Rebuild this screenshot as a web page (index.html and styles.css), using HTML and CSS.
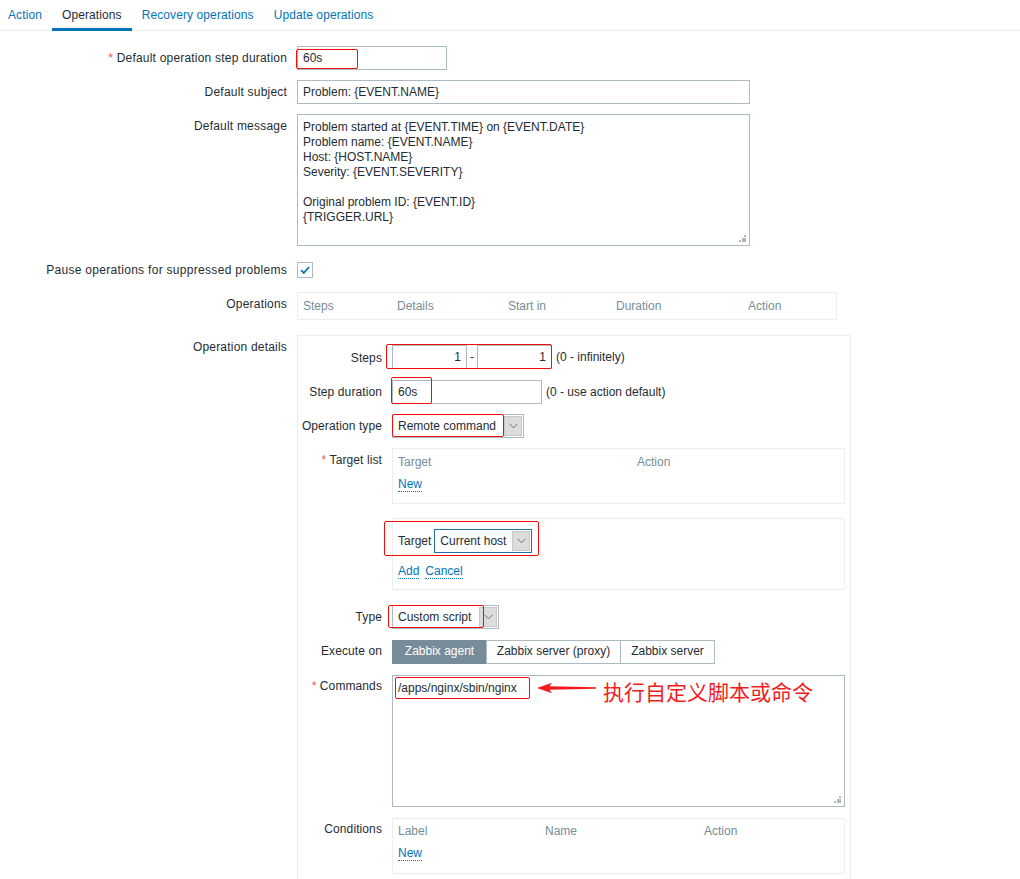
FILE: index.html
```html
<!DOCTYPE html>
<html>
<head>
<meta charset="utf-8">
<link rel="stylesheet" href="styles.css">
</head>
<body>
<div class="tabs">
  <a class="tab">Action</a>
  <a class="tab active">Operations</a>
  <a class="tab">Recovery operations</a>
  <a class="tab">Update operations</a>
</div>

<div class="form">
  <div class="row">
    <div class="lbl"><span class="req">*</span> Default operation step duration</div>
    <div class="input w150">60s<i class="mark m-dur"></i></div>
  </div>
  <div class="row">
    <div class="lbl">Default subject</div>
    <div class="input w453">Problem: {EVENT.NAME}</div>
  </div>
  <div class="row">
    <div class="lbl">Default message</div>
    <div class="textarea w453">Problem started at {EVENT.TIME} on {EVENT.DATE}
Problem name: {EVENT.NAME}
Host: {HOST.NAME}
Severity: {EVENT.SEVERITY}

Original problem ID: {EVENT.ID}
{TRIGGER.URL}<span class="grip"></span></div>
  </div>
  <div class="row row-check">
    <div class="lbl lbl-mid">Pause operations for suppressed problems</div>
    <div class="checkbox">
      <svg width="14" height="14" viewBox="0 0 14 14"><path d="M3 7.2 L5.8 10 L11 4" fill="none" stroke="#0275b8" stroke-width="1.8"/></svg>
    </div>
  </div>
  <div class="row row-ops">
    <div class="lbl">Operations</div>
    <div class="ops-table">
      <span class="th c94">Steps</span><span class="th c111">Details</span><span class="th c108">Start in</span><span class="th c132">Duration</span><span class="th">Action</span>
    </div>
  </div>
  <div class="row">
    <div class="lbl">Operation details</div>
    <div class="details">
      <div class="irow mb11">
        <div class="ilbl ilbl6">Steps</div>
        <div class="steps">
          <div class="input w75 num">1</div>
          <span class="dash">-</span>
          <div class="input w75 num">1</div>
          <i class="mark m-steps"></i>
        </div>
        <span class="hint">(0 - infinitely)</span>
      </div>
      <div class="irow mb10">
        <div class="ilbl">Step duration</div>
        <div class="input w150">60s<i class="mark m-sdur"></i></div>
        <span class="hint">(0 - use action default)</span>
      </div>
      <div class="irow mb10">
        <div class="ilbl">Operation type</div>
        <div class="select w132">
          <span class="sel-text">Remote command</span>
          <span class="sel-btn"><svg width="9" height="6" viewBox="0 0 9 6"><path d="M0.5 0.8 L4.5 4.8 L8.5 0.8" fill="none" stroke="#6b6b6b" stroke-width="1"/></svg></span>
          <i class="mark m-optype"></i>
        </div>
      </div>
      <div class="irow mb14">
        <div class="ilbl"><span class="req">*</span> Target list</div>
        <div class="subbox tl">
          <div class="sub-head"><span class="th c239">Target</span><span class="th">Action</span></div>
          <div class="sub-links"><a class="link">New</a></div>
        </div>
      </div>
      <div class="irow mb15">
        <div class="ilbl"></div>
        <div class="subbox tform">
          <div class="tf-row">
            <span class="tf-lbl">Target</span>
            <div class="select w98 focus">
              <span class="sel-text">Current host</span>
              <span class="sel-btn"><svg width="9" height="6" viewBox="0 0 9 6"><path d="M0.5 0.8 L4.5 4.8 L8.5 0.8" fill="none" stroke="#6b6b6b" stroke-width="1"/></svg></span>
            </div>
          </div>
          <div class="tf-links"><a class="link">Add</a><a class="link">Cancel</a></div>
          <i class="mark m-target"></i>
        </div>
      </div>
      <div class="irow mb11">
        <div class="ilbl">Type</div>
        <div class="select w107">
          <span class="sel-text">Custom script</span>
          <span class="sel-btn"><svg width="9" height="6" viewBox="0 0 9 6"><path d="M0.5 0.8 L4.5 4.8 L8.5 0.8" fill="none" stroke="#6b6b6b" stroke-width="1"/></svg></span>
          <i class="mark m-type"></i>
        </div>
      </div>
      <div class="irow mb11">
        <div class="ilbl ilbl4">Execute on</div>
        <div class="seg">
          <span class="seg-btn sel b95">Zabbix agent</span><span class="seg-btn b134">Zabbix server (proxy)</span><span class="seg-btn b95">Zabbix server</span>
        </div>
      </div>
      <div class="irow mb11 cmd-row">
        <div class="ilbl ilbl4"><span class="req">*</span> Commands</div>
        <div class="textarea w453 cmd">/apps/nginx/sbin/nginx<span class="grip"></span><i class="mark m-cmd"></i>
          <svg class="arrow" width="60" height="12" viewBox="0 0 60 12"><path d="M0 6 L15 0.8 L12.5 4.3 L59 5.3 L59 6.7 L12.5 7.7 L15 11.2 Z" fill="#f31c1c"/></svg>
          <span class="note">执行自定义脚本或命令</span>
        </div>
      </div>
      <div class="irow">
        <div class="ilbl ilbl4">Conditions</div>
        <div class="subbox cond">
          <div class="sub-head"><span class="th c147">Label</span><span class="th c159">Name</span><span class="th">Action</span></div>
          <div class="sub-links"><a class="link">New</a></div>
        </div>
      </div>
    </div>
  </div>
</div>
</body>
</html>
```
FILE: styles.css
```css
* { box-sizing: border-box; }
html, body { margin: 0; padding: 0; overflow: hidden; }
body {
  font-family: "Liberation Sans", Arial, sans-serif;
  font-size: 12px;
  line-height: 14px;
  color: #1f2c33;
  background: #fff;
}

/* tabs */
.tabs {
  display: flex;
  height: 31px;
  border-bottom: 1px solid #ebeef0;
}
.tab {
  display: block;
  height: 31px;
  margin-bottom: -1px;
  padding: 8px 10px 0;
  color: #0275b8;
  text-decoration: none;
  letter-spacing: 0.1px;
}
.tab:first-child { padding-left: 8px; }
.tab.active {
  color: #1f2c33;
  border-bottom: 3px solid #0275b8;
}

/* form */
.form { padding-top: 15px; }
.row {
  display: flex;
  align-items: flex-start;
  margin-bottom: 10px;
}
.lbl {
  flex: none;
  width: 287px;
  margin-right: 10px;
  padding-top: 5px;
  text-align: right;
  letter-spacing: 0.2px;
}
.req { color: #e45959; }

.row-check {
  height: 24px;
  align-items: center;
  margin-top: 11px;
  margin-bottom: 11px;
}
.lbl-mid { padding-top: 1px; letter-spacing: 0.3px; }
.checkbox {
  width: 16px;
  height: 16px;
  border: 1px solid #acbbc2;
  background: #fff;
  display: flex;
  align-items: center;
  justify-content: center;
  margin-top: 1px;
}

.input {
  position: relative;
  flex: none;
  height: 24px;
  border: 1px solid #acbbc2;
  padding: 0 5px;
  line-height: 22px;
  background: #fff;
  white-space: nowrap;
}
.num { text-align: right; }
.w75 { width: 75px; }
.w150 { width: 150px; }
.w453 { width: 453px; }

.textarea {
  position: relative;
  flex: none;
  height: 132px;
  border: 1px solid #acbbc2;
  padding: 5px 5px 4px;
  line-height: 15px;
  white-space: pre;
  background: #fff;
}
.grip {
  position: absolute;
  right: 3px;
  bottom: 3px;
  width: 7px;
  height: 7px;
  background:
    linear-gradient(#b5b5b5, #b5b5b5) 5px 0 / 2px 2px no-repeat,
    linear-gradient(#b5b5b5, #b5b5b5) 2.5px 2.5px / 2px 2px no-repeat,
    linear-gradient(#b5b5b5, #b5b5b5) 5px 2.5px / 2px 2px no-repeat,
    linear-gradient(#b5b5b5, #b5b5b5) 0 5px / 2px 2px no-repeat,
    linear-gradient(#b5b5b5, #b5b5b5) 2.5px 5px / 2px 2px no-repeat,
    linear-gradient(#b5b5b5, #b5b5b5) 5px 5px / 2px 2px no-repeat;
}

/* operations table */
.row-ops { margin-bottom: 15px; }
.ops-table {
  display: flex;
  width: 540px;
  height: 28px;
  border: 1px solid #ebeef0;
  padding: 6px 5px 0;
}
.th { color: #768d99; flex: none; }
.c94 { width: 94px; }
.c111 { width: 111px; }
.c108 { width: 108px; }
.c132 { width: 132px; }
.c239 { width: 239px; }
.c147 { width: 147px; }
.c159 { width: 159px; }

/* details box */
.details {
  width: 554px;
  height: 600px;
  border: 1px solid #ebeef0;
  padding: 9px 5px 0 0;
}
.irow {
  display: flex;
  align-items: flex-start;
}
.mb10 { margin-bottom: 10px; }
.mb11 { margin-bottom: 11px; }
.mb14 { margin-bottom: 14px; }
.mb15 { margin-bottom: 15px; }
.ilbl {
  flex: none;
  width: 84px;
  margin-right: 10px;
  padding-top: 5px;
  text-align: right;
  white-space: nowrap;
  letter-spacing: 0.1px;
}
.ilbl6 { padding-top: 6px; }
.ilbl4 { padding-top: 4px; }
.steps {
  position: relative;
  display: flex;
  align-items: flex-start;
}
.dash {
  width: 10px;
  text-align: center;
  padding-top: 5px;
}
.hint {
  padding-top: 5px;
  margin-left: 4px;
  white-space: nowrap;
}

/* select */
.select {
  position: relative;
  display: flex;
  flex: none;
  height: 24px;
  border: 1px solid #acbbc2;
  background: #fff;
}
.select.focus { border-color: #1e6ea4; }
.sel-text {
  flex: 1;
  padding: 0 5px;
  line-height: 22px;
  white-space: nowrap;
  overflow: hidden;
}
.sel-btn {
  flex: none;
  width: 18px;
  margin: 1px;
  background: #dcdcdc;
  border: 1px solid #c8c8c8;
  display: flex;
  align-items: center;
  justify-content: center;
}
.w132 { width: 132px; }
.w107 { width: 107px; }
.w98 { width: 98px; }

/* sub boxes */
.subbox {
  position: relative;
  width: 453px;
  border: 1px solid #ebeef0;
  padding: 6px 5px 0;
}
.subbox.tl { height: 56px; }
.subbox.cond { height: 56px; padding-top: 5px; }
.sub-head { display: flex; }
.sub-links { margin-top: 8px; }
.link {
  color: #0275b8;
  text-decoration: none;
  border-bottom: 1px dotted #0275b8;
  margin-right: 6px;
}
.subbox.tform {
  height: 72px;
  padding-top: 10px;
}
.tf-row {
  display: flex;
  align-items: flex-start;
}
.tf-lbl {
  padding-top: 5px;
  margin-right: 3px;
}
.tf-links { margin-top: 11px; }

/* segmented */
.seg { display: flex; }
.seg-btn {
  flex: none;
  height: 24px;
  line-height: 21px;
  text-align: center;
  border: 1px solid #acbbc2;
  margin-left: -1px;
  background: #fff;
  white-space: nowrap;
}
.seg-btn:first-child { margin-left: 0; }
.seg-btn.sel {
  background: #768d99;
  border-color: #768d99;
  color: #fff;
}
.b95 { width: 95px; }
.b134 { width: 135px; }

/* annotations */
.mark {
  position: absolute;
  border: 1px solid #f20d0d;
  border-radius: 2px;
  pointer-events: none;
}
.m-dur { left: -2px; top: 2px; width: 62px; height: 20px; }
.m-steps { left: -6px; top: -1px; width: 166px; height: 25px; }
.m-sdur { left: -2px; top: -4px; width: 41px; height: 27px; }
.m-optype { left: -1px; top: -1px; width: 112px; height: 23px; }
.m-target { left: -9px; top: 2px; width: 155px; height: 35px; }
.m-type { left: -5px; top: -1px; width: 96px; height: 23px; }
.m-cmd { left: 2px; top: 1px; width: 135px; height: 22px; }

.arrow {
  position: absolute;
  left: 144px;
  top: 6px;
}
.note {
  position: absolute;
  left: 210px;
  top: 3px;
  font-family: "Noto Sans CJK SC", sans-serif;
  font-size: 21px;
  line-height: 24px;
  color: #f31c1c;
  white-space: nowrap;
}
```
